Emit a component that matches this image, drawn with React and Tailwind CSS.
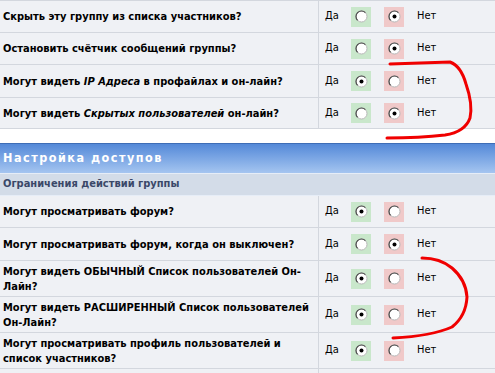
import React from "react";

function Radio({ checked }) {
  return (
    <svg width="13" height="13" viewBox="0 0 13 13">
      <circle cx="6.5" cy="6.5" r="5.5" fill="#fff" stroke="#b8b8b8" strokeWidth="1" />
      <path d="M2.6 10.4 A5.5 5.5 0 0 1 10.4 2.6" fill="none" stroke="#4a4a4a" strokeWidth="1.2" />
      {checked && <circle cx="6.5" cy="6.5" r="2" fill="#000" />}
    </svg>
  );
}

function YesNo({ yes }) {
  return (
    <div className="flex items-center pl-[6px] border-l border-[#d3d7de] h-full">
      <span className="text-[11px] text-black w-[12px]">Да</span>
      <div className="ml-[14px] w-[20px] h-[20px] bg-[#c9e7cb] flex items-center justify-center">
        <Radio checked={yes} />
      </div>
      <div className="ml-[13px] w-[20px] h-[20px] bg-[#f0c9c9] flex items-center justify-center">
        <Radio checked={!yes} />
      </div>
      <span className="ml-[13px] text-[11px] text-black">Нет</span>
    </div>
  );
}

function Row({ children, yes, h = "h-[32px]" }) {
  return (
    <div className={`grid grid-cols-[318px_1fr] ${h} border-b border-[#d3d7de] bg-[#eff1f5]`}>
      <div className="flex items-center pl-[3px] text-[11px] font-bold text-black leading-[15px] pr-2">
        <div>{children}</div>
      </div>
      <YesNo yes={yes} />
    </div>
  );
}

export default function App() {
  return (
    <div
      className="relative w-[495px] h-[373px] bg-white overflow-hidden"
      style={{ fontFamily: '"DejaVu Sans Condensed", "DejaVu Sans", sans-serif' }}
    >
      <div className="border-t border-[#d3d7de]">
        <Row yes={false} h="h-[32px]">Скрыть эту группу из списка участников?</Row>
        <Row yes={false} h="h-[32px]">Остановить счётчик сообщений группы?</Row>
        <Row yes={true} h="h-[33px]">
          Могут видеть <i>IP Адреса</i> в профайлах и он-лайн?
        </Row>
        <Row yes={false} h="h-[31px]">
          Могут видеть <i>Скрытых пользователей</i> он-лайн?
        </Row>
      </div>
      <div className="h-[14px]" />
      <div className="h-[30px] border-t border-[#3e6db6] bg-gradient-to-b from-[#5489d8] to-[#a5c5f0] flex items-center pl-[3px]">
        <span className="text-white font-bold text-[12.5px] tracking-[1.5px]">Настройка доступов</span>
      </div>
      <div className="h-[23px] border-t border-[#e6edf7] bg-[#d3dce8] flex items-center pl-[3px] border-b border-[#c5cfdc]">
        <span className="text-[#3a4868] font-bold text-[11px]">Ограничения действий группы</span>
      </div>
      <Row yes={true} h="h-[32px]">Могут просматривать форум?</Row>
      <Row yes={false} h="h-[33px]">Могут просматривать форум, когда он выключен?</Row>
      <Row yes={true} h="h-[36px]">
        Могут видеть ОБЫЧНЫЙ Список пользователей Он-
        <br />
        Лайн?
      </Row>
      <Row yes={true} h="h-[36px]">
        Могут видеть РАСШИРЕННЫЙ Список пользователей
        <br />
        Он-Лайн?
      </Row>
      <Row yes={true} h="h-[36px]">
        Могут просматривать профиль пользователей и
        <br />
        список участников?
      </Row>
      <div className="grid grid-cols-[318px_1fr] h-[32px] bg-[#eff1f5]">
        <div />
        <div className="border-l border-[#d3d7de]" />
      </div>

      <svg className="absolute left-0 top-0 pointer-events-none" width="495" height="373" viewBox="0 0 495 373">
        <path
          d="M390 64 L450 62 Q461 66 466 84 Q473 104 470 118 Q465 132 445 135 Q420 138 387 138"
          fill="none"
          stroke="#f00000"
          strokeWidth="3"
          strokeLinecap="round"
        />
        <path
          d="M422 258 Q440 258 452 268 Q466 280 467 297 Q466 316 452 327 Q432 336 393 338"
          fill="none"
          stroke="#f00000"
          strokeWidth="3"
          strokeLinecap="round"
        />
      </svg>
    </div>
  );
}
